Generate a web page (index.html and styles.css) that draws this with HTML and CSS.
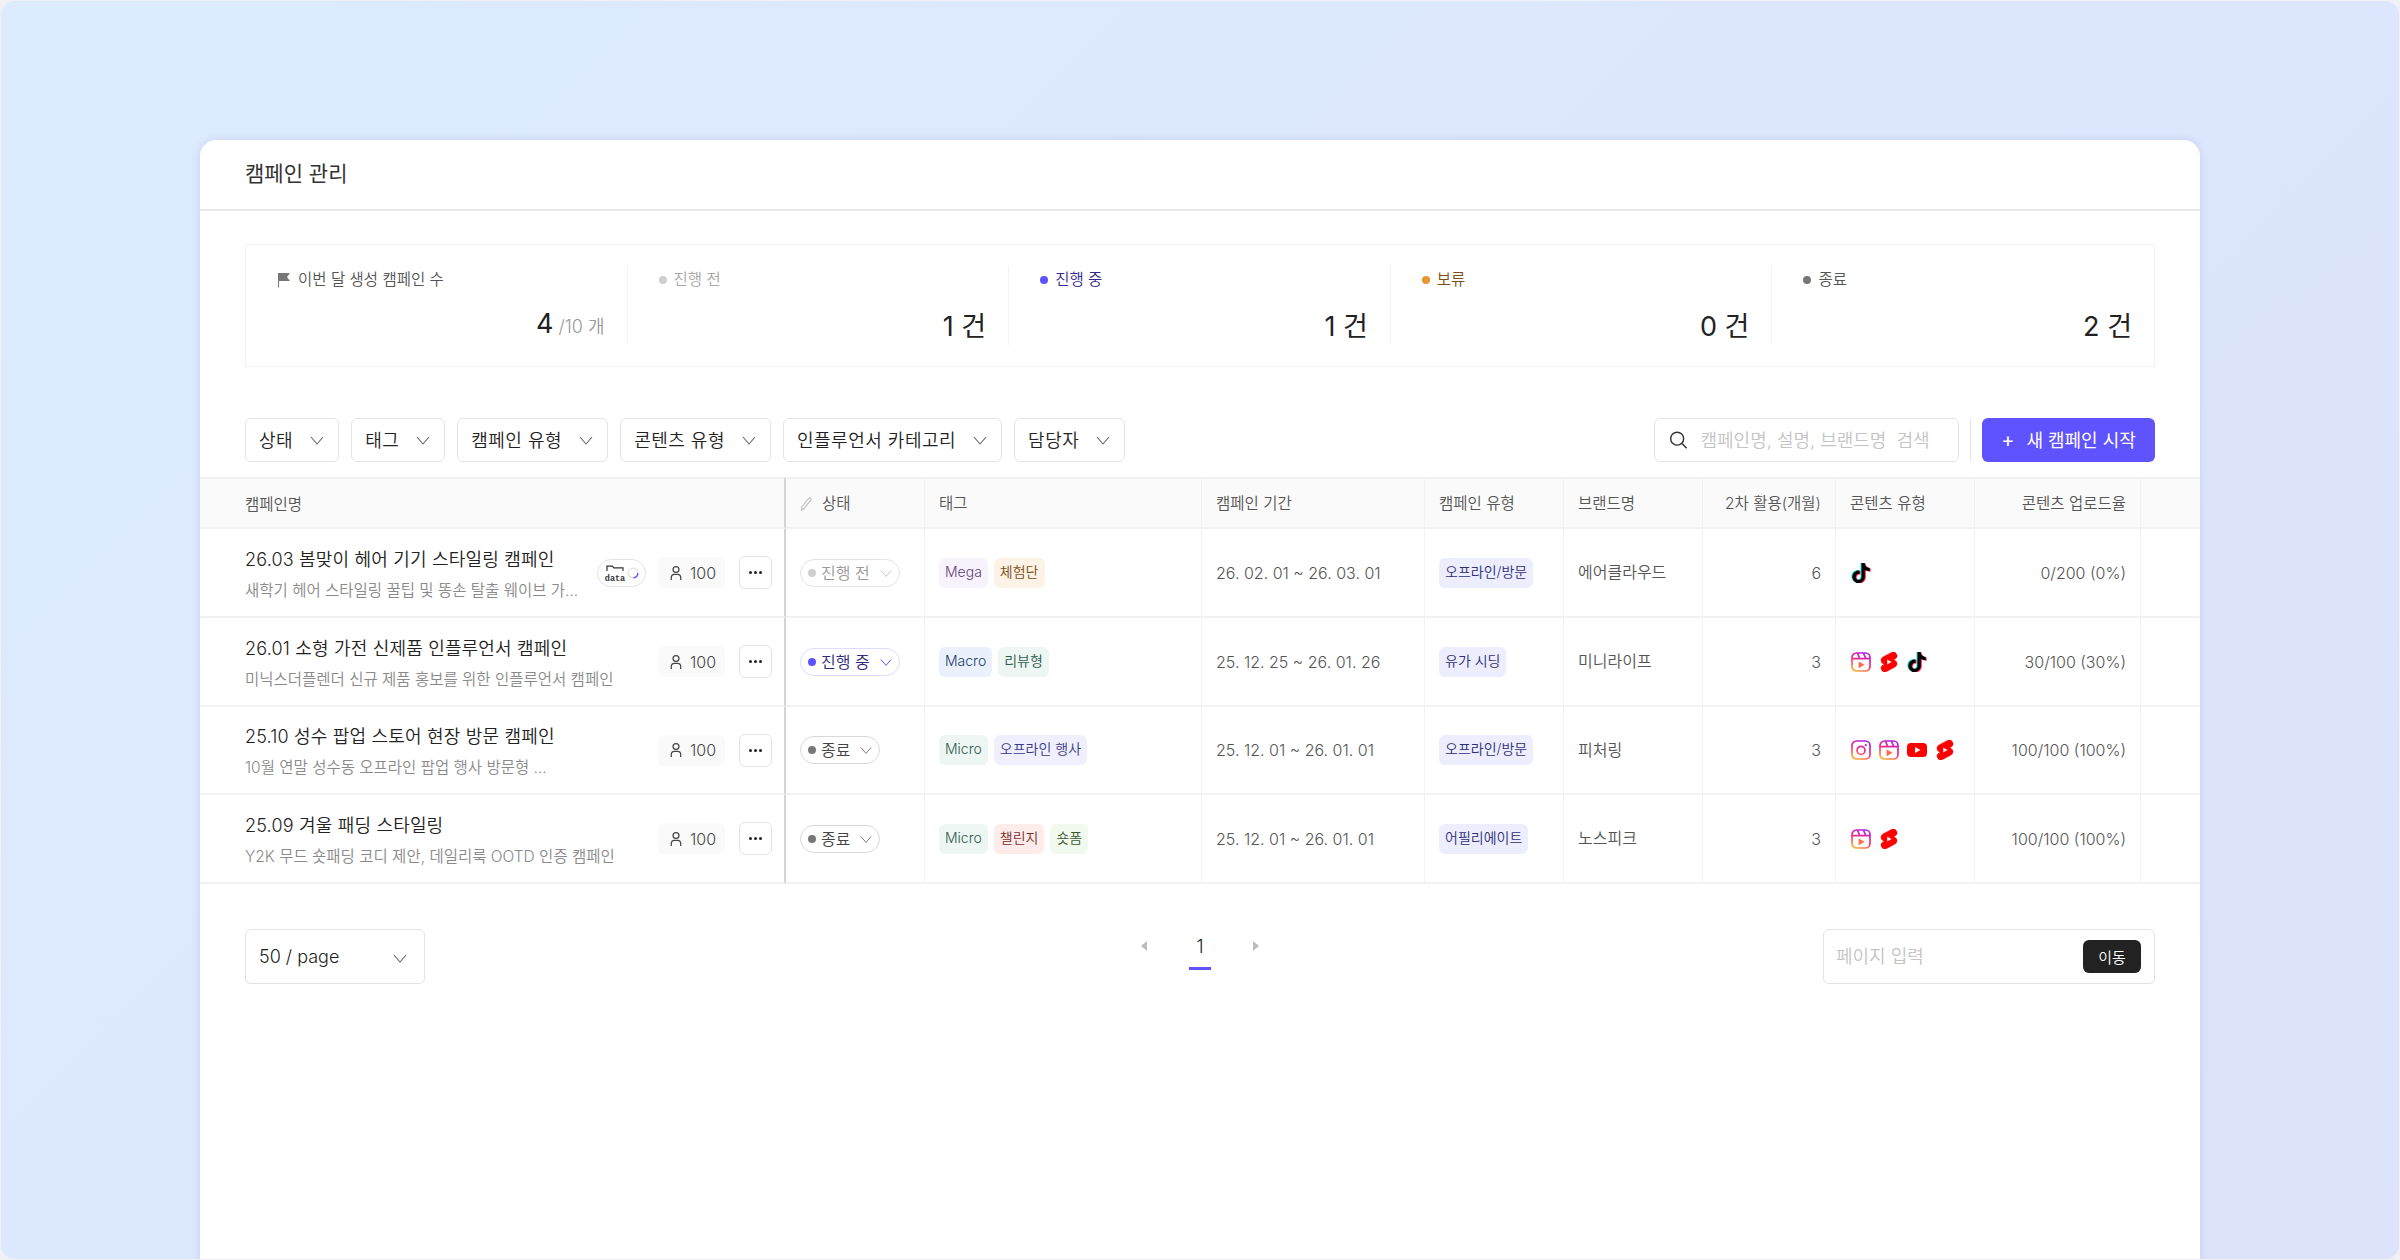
FILE: index.html
```html
<!DOCTYPE html>
<html lang="ko">
<head>
<meta charset="UTF-8" />
<meta name="viewport" content="width=device-width, initial-scale=1.0" />
<title>캠페인 관리</title>
<link rel="stylesheet" href="styles.css">
</head>
<body>
<svg class="icon-defs" aria-hidden="true">
  <defs>
    <linearGradient id="ig" gradientUnits="userSpaceOnUse" x1="14" y1="0" x2="5" y2="20">
      <stop offset="0" stop-color="#a81fee" />
      <stop offset="0.5" stop-color="#f72c7c" />
      <stop offset="1" stop-color="#ffb52e" />
    </linearGradient>
    <symbol id="i-chevron" viewBox="0 0 14 14"><path d="M1 4l6 7 6-7" fill="none" stroke="currentColor" stroke-width="1.1" /></symbol>
    <symbol id="i-user" viewBox="0 0 16 18"><circle cx="8" cy="5" r="3.4" fill="none" stroke="currentColor" stroke-width="1.4" /><path d="M2.6 17v-3a3.4 3.4 0 0 1 3.4-3.4h4a3.4 3.4 0 0 1 3.4 3.4v3" fill="none" stroke="currentColor" stroke-width="1.4" /></symbol>
    <symbol id="i-tiktok" viewBox="0 0 24 24">
      <path fill="#25f4ee" transform="translate(-1.2 -.6)" d="M12.525.02c1.31-.02 2.61-.01 3.91-.02.08 1.53.63 3.09 1.75 4.17 1.12 1.11 2.7 1.62 4.24 1.79v4.03c-1.44-.05-2.89-.35-4.2-.97-.57-.26-1.1-.59-1.62-.93-.01 2.92.01 5.84-.02 8.75-.08 1.4-.54 2.79-1.35 3.94-1.31 1.92-3.58 3.17-5.91 3.21-1.43.08-2.86-.31-4.08-1.03-2.02-1.19-3.44-3.37-3.65-5.71-.02-.5-.03-1-.01-1.49.18-1.9 1.12-3.72 2.58-4.96 1.66-1.44 3.98-2.13 6.15-1.72.02 1.48-.04 2.96-.04 4.44-.99-.32-2.15-.23-3.02.37-.63.41-1.11 1.04-1.36 1.75-.21.51-.15 1.07-.14 1.61.24 1.64 1.82 3.02 3.5 2.87 1.12-.01 2.19-.66 2.77-1.61.19-.33.4-.67.41-1.06.1-1.79.06-3.57.07-5.36.01-4.03-.01-8.05.02-12.07z" />
      <path fill="#fe2c55" transform="translate(1.2 .6)" d="M12.525.02c1.31-.02 2.61-.01 3.91-.02.08 1.53.63 3.09 1.75 4.17 1.12 1.11 2.7 1.62 4.24 1.79v4.03c-1.44-.05-2.89-.35-4.2-.97-.57-.26-1.1-.59-1.62-.93-.01 2.92.01 5.84-.02 8.75-.08 1.4-.54 2.79-1.35 3.94-1.31 1.92-3.58 3.17-5.91 3.21-1.43.08-2.86-.31-4.08-1.03-2.02-1.19-3.44-3.37-3.65-5.71-.02-.5-.03-1-.01-1.49.18-1.9 1.12-3.72 2.58-4.96 1.66-1.44 3.98-2.13 6.15-1.72.02 1.48-.04 2.96-.04 4.44-.99-.32-2.15-.23-3.02.37-.63.41-1.11 1.04-1.36 1.75-.21.51-.15 1.07-.14 1.61.24 1.64 1.82 3.02 3.5 2.87 1.12-.01 2.19-.66 2.77-1.61.19-.33.4-.67.41-1.06.1-1.79.06-3.57.07-5.36.01-4.03-.01-8.05.02-12.07z" />
      <path fill="#000" d="M12.525.02c1.31-.02 2.61-.01 3.91-.02.08 1.53.63 3.09 1.75 4.17 1.12 1.11 2.7 1.62 4.24 1.79v4.03c-1.44-.05-2.89-.35-4.2-.97-.57-.26-1.1-.59-1.62-.93-.01 2.92.01 5.84-.02 8.75-.08 1.4-.54 2.79-1.35 3.94-1.31 1.92-3.58 3.17-5.91 3.21-1.43.08-2.86-.31-4.08-1.03-2.02-1.19-3.44-3.37-3.65-5.71-.02-.5-.03-1-.01-1.49.18-1.9 1.12-3.72 2.58-4.96 1.66-1.44 3.98-2.13 6.15-1.72.02 1.48-.04 2.96-.04 4.44-.99-.32-2.15-.23-3.02.37-.63.41-1.11 1.04-1.36 1.75-.21.51-.15 1.07-.14 1.61.24 1.64 1.82 3.02 3.5 2.87 1.12-.01 2.19-.66 2.77-1.61.19-.33.4-.67.41-1.06.1-1.79.06-3.57.07-5.36.01-4.03-.01-8.05.02-12.07z" />
    </symbol>
    <symbol id="i-reels" viewBox="0 0 20 20">
      <rect x="1" y="1" width="18" height="18" rx="4.5" fill="none" stroke="url(#ig)" stroke-width="1.7" />
      <path d="M1 6.6h18M6.4 1l2.4 5.6M12.4 1l2.4 5.6" fill="none" stroke="url(#ig)" stroke-width="1.7" />
      <path d="M7.6 9.4l6 3.4-6 3.4z" fill="#ff6a4a" />
    </symbol>
    <symbol id="i-shorts" viewBox="2 2 20 20">
      <path fill="#ff0000" stroke="#ff0000" stroke-width=".5" d="M17.77 10.32l-1.2-.5L18 9.06a3.74 3.74 0 0 0-3.5-6.62L6 6.94a3.74 3.74 0 0 0 .23 6.74l1.2.49L6 14.93a3.75 3.75 0 0 0 3.5 6.63l8.5-4.5a3.74 3.74 0 0 0-.23-6.74zM10 14.65v-5.3L15 12z" />
    </symbol>
    <symbol id="i-instagram" viewBox="0 0 20 20">
      <rect x="1" y="1" width="18" height="18" rx="4.5" fill="none" stroke="url(#ig)" stroke-width="1.7" />
      <circle cx="10" cy="10.4" r="4" fill="none" stroke="url(#ig)" stroke-width="1.7" />
      <circle cx="14.8" cy="5.2" r="1.1" fill="#d82a9a" />
    </symbol>
    <symbol id="i-youtube" viewBox="0 0 20 20">
      <rect x="0" y="3" width="20" height="14" rx="4" fill="#ff0000" />
      <path d="M8 7l5.4 3L8 13z" fill="#fff" />
    </symbol>
  </defs>
</svg>

<div class="frame">
  <main class="card">
    <header class="card-head">
      <h1>캠페인 관리</h1>
    </header>

    <section class="stats">
      <div class="stat">
        <div class="stat-label">
          <svg class="flag" viewBox="0 0 14 16"><path d="M1 1h12l-3 4 3 4H2v6.5H1z" fill="#777" /></svg>
          이번 달 생성 캠페인 수
        </div>
        <div class="stat-value">4<small>/10 개</small></div>
      </div>
      <div class="stat">
        <div class="stat-label is-before"><i class="dot"></i>진행 전</div>
        <div class="stat-value">1 건</div>
      </div>
      <div class="stat">
        <div class="stat-label is-active"><i class="dot"></i>진행 중</div>
        <div class="stat-value">1 건</div>
      </div>
      <div class="stat">
        <div class="stat-label is-hold"><i class="dot"></i>보류</div>
        <div class="stat-value">0 건</div>
      </div>
      <div class="stat">
        <div class="stat-label is-done"><i class="dot"></i>종료</div>
        <div class="stat-value">2 건</div>
      </div>
    </section>

    <section class="toolbar">
      <button class="filter">상태<svg class="chev"><use href="#i-chevron" /></svg></button>
      <button class="filter">태그<svg class="chev"><use href="#i-chevron" /></svg></button>
      <button class="filter">캠페인 유형<svg class="chev"><use href="#i-chevron" /></svg></button>
      <button class="filter">콘텐츠 유형<svg class="chev"><use href="#i-chevron" /></svg></button>
      <button class="filter">인플루언서 카테고리<svg class="chev"><use href="#i-chevron" /></svg></button>
      <button class="filter">담당자<svg class="chev"><use href="#i-chevron" /></svg></button>
      <div class="search">
        <svg class="search-icon" viewBox="0 0 20 20"><circle cx="8.6" cy="8.6" r="6.8" fill="none" stroke="#333" stroke-width="1.5" /><path d="M13.6 13.6l5 5" stroke="#333" stroke-width="1.5" /></svg>
        <span>캠페인명, 설명, 브랜드명&nbsp; 검색</span>
      </div>
      <i class="tool-sep"></i>
      <button class="btn-new"><span class="plus">+</span>새 캠페인 시작</button>
    </section>

    <table class="grid">
      <colgroup>
        <col class="c-name"><col class="c-status"><col class="c-tag"><col class="c-date"><col class="c-type"><col class="c-brand"><col class="c-month"><col class="c-content"><col class="c-rate"><col class="c-end">
      </colgroup>
      <thead>
        <tr>
          <th class="first">캠페인명</th>
          <th class="pin-left"><svg class="pen" viewBox="0 0 14 16"><path d="M2 11.5L9.5 2.2a1.6 1.6 0 0 1 2.3 1.9L4.3 13.4 1.6 15z" fill="none" stroke="#bbb" stroke-width="1.1" /></svg>상태</th>
          <th>태그</th>
          <th>캠페인 기간</th>
          <th>캠페인 유형</th>
          <th>브랜드명</th>
          <th class="num">2차 활용(개월)</th>
          <th>콘텐츠 유형</th>
          <th class="num">콘텐츠 업로드율</th>
          <th></th>
        </tr>
      </thead>
      <tbody>
        <tr>
          <td class="first">
            <div class="name-cell">
              <div class="name-text">
                <div class="name">26.03 봄맞이 헤어 기기 스타일링 캠페인</div>
                <div class="desc">새학기 헤어 스타일링 꿀팁 및 똥손 탈출 웨이브 가...</div>
              </div>
              <div class="data-pill">
                <svg class="data-icon" viewBox="0 0 20 18"><path d="M2 7V2.2h5.4l1.4 1.6H18V7" fill="none" stroke="#333" stroke-width="1.2" /><text x="10" y="16.5" text-anchor="middle">data</text></svg>
                <svg class="ring" viewBox="0 0 14 14"><circle cx="7" cy="7" r="5.6" fill="none" stroke="#e4e4e4" stroke-width="1.6" /><path d="M12.6 7a5.6 5.6 0 0 1-5 5.6" fill="none" stroke="#5f53ff" stroke-width="1.6" /></svg>
              </div>
              <div class="people"><svg class="user"><use href="#i-user" /></svg>100</div>
              <button class="more"><i></i><i></i><i></i></button>
            </div>
          </td>
          <td class="pin-left"><span class="status is-before"><i class="dot"></i>진행 전<svg class="chev-s"><use href="#i-chevron" /></svg></span></td>
          <td><div class="tags"><span class="tag t-purple">Mega</span><span class="tag t-orange">체험단</span></div></td>
          <td>26. 02. 01 ~ 26. 03. 01</td>
          <td><span class="tag t-indigo">오프라인/방문</span></td>
          <td class="brand">에어클라우드</td>
          <td class="num">6</td>
          <td><div class="platforms"><svg class="pf"><use href="#i-tiktok" /></svg></div></td>
          <td class="num">0/200 (0%)</td>
          <td></td>
        </tr>
        <tr>
          <td class="first">
            <div class="name-cell">
              <div class="name-text">
                <div class="name">26.01 소형 가전 신제품 인플루언서 캠페인</div>
                <div class="desc">미닉스더플렌더 신규 제품 홍보를 위한 인플루언서 캠페인</div>
              </div>
              <div class="people"><svg class="user"><use href="#i-user" /></svg>100</div>
              <button class="more"><i></i><i></i><i></i></button>
            </div>
          </td>
          <td class="pin-left"><span class="status is-active"><i class="dot"></i>진행 중<svg class="chev-s"><use href="#i-chevron" /></svg></span></td>
          <td><div class="tags"><span class="tag t-blue">Macro</span><span class="tag t-green">리뷰형</span></div></td>
          <td>25. 12. 25 ~ 26. 01. 26</td>
          <td><span class="tag t-indigo">유가 시딩</span></td>
          <td class="brand">미니라이프</td>
          <td class="num">3</td>
          <td><div class="platforms"><svg class="pf"><use href="#i-reels" /></svg><svg class="pf"><use href="#i-shorts" /></svg><svg class="pf"><use href="#i-tiktok" /></svg></div></td>
          <td class="num">30/100 (30%)</td>
          <td></td>
        </tr>
        <tr>
          <td class="first">
            <div class="name-cell">
              <div class="name-text">
                <div class="name">25.10 성수 팝업 스토어 현장 방문 캠페인</div>
                <div class="desc">10월 연말 성수동 오프라인 팝업 행사 방문형 ...</div>
              </div>
              <div class="people"><svg class="user"><use href="#i-user" /></svg>100</div>
              <button class="more"><i></i><i></i><i></i></button>
            </div>
          </td>
          <td class="pin-left"><span class="status is-done"><i class="dot"></i>종료<svg class="chev-s"><use href="#i-chevron" /></svg></span></td>
          <td><div class="tags"><span class="tag t-green">Micro</span><span class="tag t-violet">오프라인 행사</span></div></td>
          <td>25. 12. 01 ~ 26. 01. 01</td>
          <td><span class="tag t-indigo">오프라인/방문</span></td>
          <td class="brand">피처링</td>
          <td class="num">3</td>
          <td><div class="platforms"><svg class="pf"><use href="#i-instagram" /></svg><svg class="pf"><use href="#i-reels" /></svg><svg class="pf"><use href="#i-youtube" /></svg><svg class="pf"><use href="#i-shorts" /></svg></div></td>
          <td class="num">100/100 (100%)</td>
          <td></td>
        </tr>
        <tr>
          <td class="first">
            <div class="name-cell">
              <div class="name-text">
                <div class="name">25.09 겨울 패딩 스타일링</div>
                <div class="desc">Y2K 무드 숏패딩 코디 제안, 데일리룩 OOTD 인증 캠페인</div>
              </div>
              <div class="people"><svg class="user"><use href="#i-user" /></svg>100</div>
              <button class="more"><i></i><i></i><i></i></button>
            </div>
          </td>
          <td class="pin-left"><span class="status is-done"><i class="dot"></i>종료<svg class="chev-s"><use href="#i-chevron" /></svg></span></td>
          <td><div class="tags"><span class="tag t-green">Micro</span><span class="tag t-red">챌린지</span><span class="tag t-lime">숏폼</span></div></td>
          <td>25. 12. 01 ~ 26. 01. 01</td>
          <td><span class="tag t-indigo">어필리에이트</span></td>
          <td class="brand">노스피크</td>
          <td class="num">3</td>
          <td><div class="platforms"><svg class="pf"><use href="#i-reels" /></svg><svg class="pf"><use href="#i-shorts" /></svg></div></td>
          <td class="num">100/100 (100%)</td>
          <td></td>
        </tr>
      </tbody>
    </table>

    <footer class="pager">
      <button class="page-size">50 / page<svg class="chev"><use href="#i-chevron" /></svg></button>
      <div class="pages">
        <svg class="arrow" viewBox="0 0 8 12"><path d="M7 1v10L1 6z" fill="#bdbdbd" /></svg>
        <span class="page-num">1</span>
        <svg class="arrow" viewBox="0 0 8 12"><path d="M1 1v10l6-5z" fill="#bdbdbd" /></svg>
      </div>
      <div class="page-go">
        <span class="page-hint">페이지 입력</span>
        <button class="go">이동</button>
      </div>
    </footer>
  </main>
</div>
</body>
</html>
```

FILE: styles.css
```css
:root {
  --accent: #5f53ff;
  --line: #f2f2f2;
  --border: #e3e3e3;
}

* {
  box-sizing: border-box;
}

html, body {
  margin: 0;
  height: 100%;
}

body {
  background: #f1f1f3;
  font-family: Inter, "Noto Sans CJK KR", sans-serif;
  font-weight: 350;
  color: #222;
  overflow: hidden;
}

button {
  font: inherit;
  color: inherit;
  background: #fff;
  cursor: pointer;
}

.icon-defs {
  display: block;
  width: 0;
  height: 0;
}

.frame {
  height: 1258px;
  margin: 1px;
  padding: 139px 199px 0;
  border-radius: 14px;
  background: linear-gradient(135deg, #dcebfe, #dce3fb);
  overflow: hidden;
}

.card {
  height: 1130px;
  background: #fff;
  border-radius: 16px 16px 0 0;
  box-shadow: 0 0 8px rgba(70, 80, 160, 0.14);
}

.card-head {
  height: 71px;
  padding: 0 45px 5px;
  display: flex;
  align-items: center;
  border-bottom: 2px solid #eaeaea;
}

.card-head h1 {
  margin: 0;
  font-size: 21px;
  font-weight: 400;
  color: #333;
}

.stats {
  display: grid;
  grid-template-columns: repeat(5, 1fr);
  margin: 33px 45px 0;
  padding: 21px 0;
  height: 123px;
  border: 1px solid var(--line);
}

.stat {
  padding: 3px 22px 0 31px;
  display: flex;
  flex-direction: column;
  justify-content: space-between;
  border-right: 1.5px solid var(--line);
}

.stat:last-child {
  border-right: 0;
}

.stat-label {
  display: flex;
  align-items: center;
  gap: 7px;
  font-size: 15.5px;
  line-height: 22px;
  color: #555;
}

.flag {
  width: 14px;
  height: 16px;
}

.dot {
  width: 8px;
  height: 8px;
  border-radius: 50%;
  background: currentColor;
  flex: none;
}

.stat-label.is-before { color: #a8a8a8; }
.stat-label.is-before .dot { background: #cfcfcf; }
.stat-label.is-active { color: #332a8c; }
.stat-label.is-active .dot { background: var(--accent); }
.stat-label.is-hold { color: #7c5018; }
.stat-label.is-hold .dot { background: #e8942f; }
.stat-label.is-done .dot { background: #777; }

.stat-value {
  text-align: right;
  font-size: 27px;
  font-weight: 400;
  line-height: 38px;
  margin-bottom: -1px;
}

.stat-value small {
  margin-left: 5px;
  font-size: 18px;
  font-weight: 350;
  color: #999;
}

.toolbar {
  display: flex;
  align-items: stretch;
  gap: 12px;
  height: 44px;
  margin: 51px 45px 15px;
}

.filter {
  display: flex;
  align-items: center;
  gap: 17px;
  padding: 0 14px 3px 13px;
  font-size: 18px;
  letter-spacing: 0.5px;
  border: 1.5px solid var(--border);
  border-radius: 6px;
  white-space: nowrap;
}

.chev {
  width: 14px;
  height: 14px;
  margin-top: 3px;
  color: #666;
}

.search {
  display: flex;
  align-items: center;
  gap: 13px;
  width: 305px;
  margin-left: auto;
  padding: 0 14px;
  font-size: 18px;
  color: #c4c4c4;
  border: 1.5px solid var(--border);
  border-radius: 6px;
  white-space: nowrap;
}

.search span {
  margin-bottom: 3px;
}

.search-icon {
  width: 19px;
  height: 20px;
  flex: none;
}

.tool-sep {
  width: 1.5px;
  margin: 0 -1px;
  background: #e5e5e5;
}

.btn-new {
  width: 173px;
  padding: 0 0 3px;
  font-size: 18px;
  font-weight: 400;
  color: #fff;
  background: var(--accent);
  border: 0;
  border-radius: 6px;
  white-space: nowrap;
}

.plus {
  font-size: 20px;
  margin-right: 12px;
}

.grid {
  width: 100%;
  table-layout: fixed;
  border-collapse: separate;
  border-spacing: 0;
  font-size: 16px;
  color: #555;
}

.c-name { width: 586px; }
.c-status { width: 139px; }
.c-tag { width: 277px; }
.c-date { width: 223px; }
.c-type { width: 139px; }
.c-brand { width: 139px; }
.c-month { width: 133px; }
.c-content { width: 139px; }
.c-rate { width: 166px; }
.c-end { width: 59px; }

.grid th,
.grid td {
  padding: 0 14px;
  border-right: 1.5px solid var(--line);
  border-bottom: 2px solid var(--line);
  text-align: left;
  white-space: nowrap;
}

.grid th {
  height: 52px;
  padding-bottom: 2px;
  font-size: 15.5px;
  font-weight: 350;
  color: #555;
  background: #fafafa;
  border-top: 2px solid var(--line);
}

.grid td {
  height: 89px;
}

.grid tbody tr:nth-child(3) td {
  height: 88px;
}

.grid th:last-child,
.grid td:last-child {
  border-right: 0;
}

.grid .num {
  text-align: right;
}

.grid .brand {
  padding-bottom: 3px;
}

.grid .first {
  padding: 0 12px 0 45px;
  border-right: 2px solid #d4d4d4;
}

.pen {
  width: 13px;
  height: 15px;
  margin-right: 9px;
  vertical-align: -2px;
}

.name-cell {
  display: flex;
  align-items: center;
}

.name-text {
  flex: 1;
  min-width: 0;
  padding-top: 3px;
}

.name {
  font-size: 18px;
  line-height: 26px;
  letter-spacing: 0.18px;
  color: #222;
  margin-bottom: 7px;
}

.desc {
  font-size: 15.5px;
  line-height: 22px;
  color: #8a8a8a;
}

.data-pill {
  display: flex;
  align-items: center;
  gap: 2px;
  width: 49px;
  height: 28px;
  margin-right: 12px;
  padding-left: 7px;
  border: 1.5px solid var(--border);
  border-radius: 14px;
}

.data-icon {
  width: 20px;
  height: 18px;
}

.data-icon text {
  font-family: "Liberation Mono", monospace;
  font-size: 8.5px;
  font-weight: 700;
  fill: #333;
}

.ring {
  width: 12px;
  height: 12px;
}

.people {
  display: flex;
  align-items: center;
  gap: 7px;
  width: 67px;
  height: 31px;
  margin-right: 14px;
  padding-left: 11px;
  font-size: 16px;
  color: #444;
  background: #fafafa;
  border-radius: 6px;
}

.user {
  width: 14px;
  height: 16px;
}

.more {
  display: flex;
  align-items: center;
  justify-content: center;
  gap: 2px;
  width: 33px;
  height: 33px;
  padding: 0;
  border: 1.5px solid var(--border);
  border-radius: 6px;
}

.more i {
  width: 3px;
  height: 3px;
  border-radius: 50%;
  background: #222;
}

.status {
  display: inline-flex;
  align-items: center;
  gap: 5px;
  height: 28px;
  padding: 0 7px;
  font-size: 16px;
  line-height: 1;
  border: 1.5px solid var(--border);
  border-radius: 14px;
  vertical-align: middle;
}

.chev-s {
  width: 12px;
  height: 12px;
  margin-left: 5px;
  color: #777;
}

.status.is-before { color: #9a9a9a; }
.status.is-before .dot { background: #cfcfcf; }
.status.is-before .chev-s { color: #c4c4c4; }
.status.is-active { color: #2f2a80; border-color: #dcdcff; }
.status.is-active .dot { background: var(--accent); }
.status.is-active .chev-s { color: var(--accent); }
.status.is-done { color: #444; border-color: #d8d8d8; }
.status.is-done .dot { background: #777; }

.tags {
  display: flex;
  gap: 6px;
}

.tag {
  display: inline-block;
  height: 30px;
  padding: 0 6px;
  font-size: 14px;
  line-height: 28px;
  border-radius: 6px;
  vertical-align: middle;
}

.t-purple { background: #f8f2fd; color: #5e3d78; }
.t-orange { background: #fdf2e6; color: #7a4a14; }
.t-indigo { background: #eceefd; color: #2f2f7a; }
.t-blue { background: #eaf1fd; color: #1d3a66; }
.t-green { background: #edf6f3; color: #2e5a4c; }
.t-violet { background: #efeffe; color: #3a3a8a; }
.t-red { background: #fdecea; color: #7a2f2a; }
.t-lime { background: #f1f8ee; color: #3f5a30; }

.platforms {
  display: flex;
  gap: 8px;
  margin-left: 1px;
}

.pf {
  width: 20px;
  height: 20px;
}

.pager {
  display: grid;
  grid-template-columns: 1fr auto 1fr;
  align-items: start;
  margin: 45px 45px 0;
}

.page-size {
  display: flex;
  align-items: center;
  justify-content: space-between;
  width: 180px;
  height: 55px;
  padding: 0 17px 0 13px;
  font-size: 18px;
  border: 1.5px solid var(--border);
  border-radius: 6px;
}

.pages {
  display: flex;
  align-items: flex-start;
  gap: 41px;
}

.arrow {
  width: 8px;
  height: 12px;
  margin-top: 11px;
}

.page-num {
  width: 22px;
  height: 41px;
  padding-top: 3px;
  text-align: center;
  font-size: 18px;
  line-height: 30px;
  color: #222;
  border-bottom: 3px solid var(--accent);
}

.page-go {
  display: flex;
  align-items: center;
  justify-content: space-between;
  justify-self: end;
  width: 332px;
  height: 55px;
  padding: 0 13px 0 12px;
  font-size: 18px;
  color: #c4c4c4;
  border: 1.5px solid var(--border);
  border-radius: 6px;
}

.page-hint {
  margin-bottom: 3px;
}

.go {
  width: 58px;
  height: 33px;
  padding: 0;
  font-size: 15px;
  color: #fff;
  background: #222;
  border: 0;
  border-radius: 6px;
}
```
